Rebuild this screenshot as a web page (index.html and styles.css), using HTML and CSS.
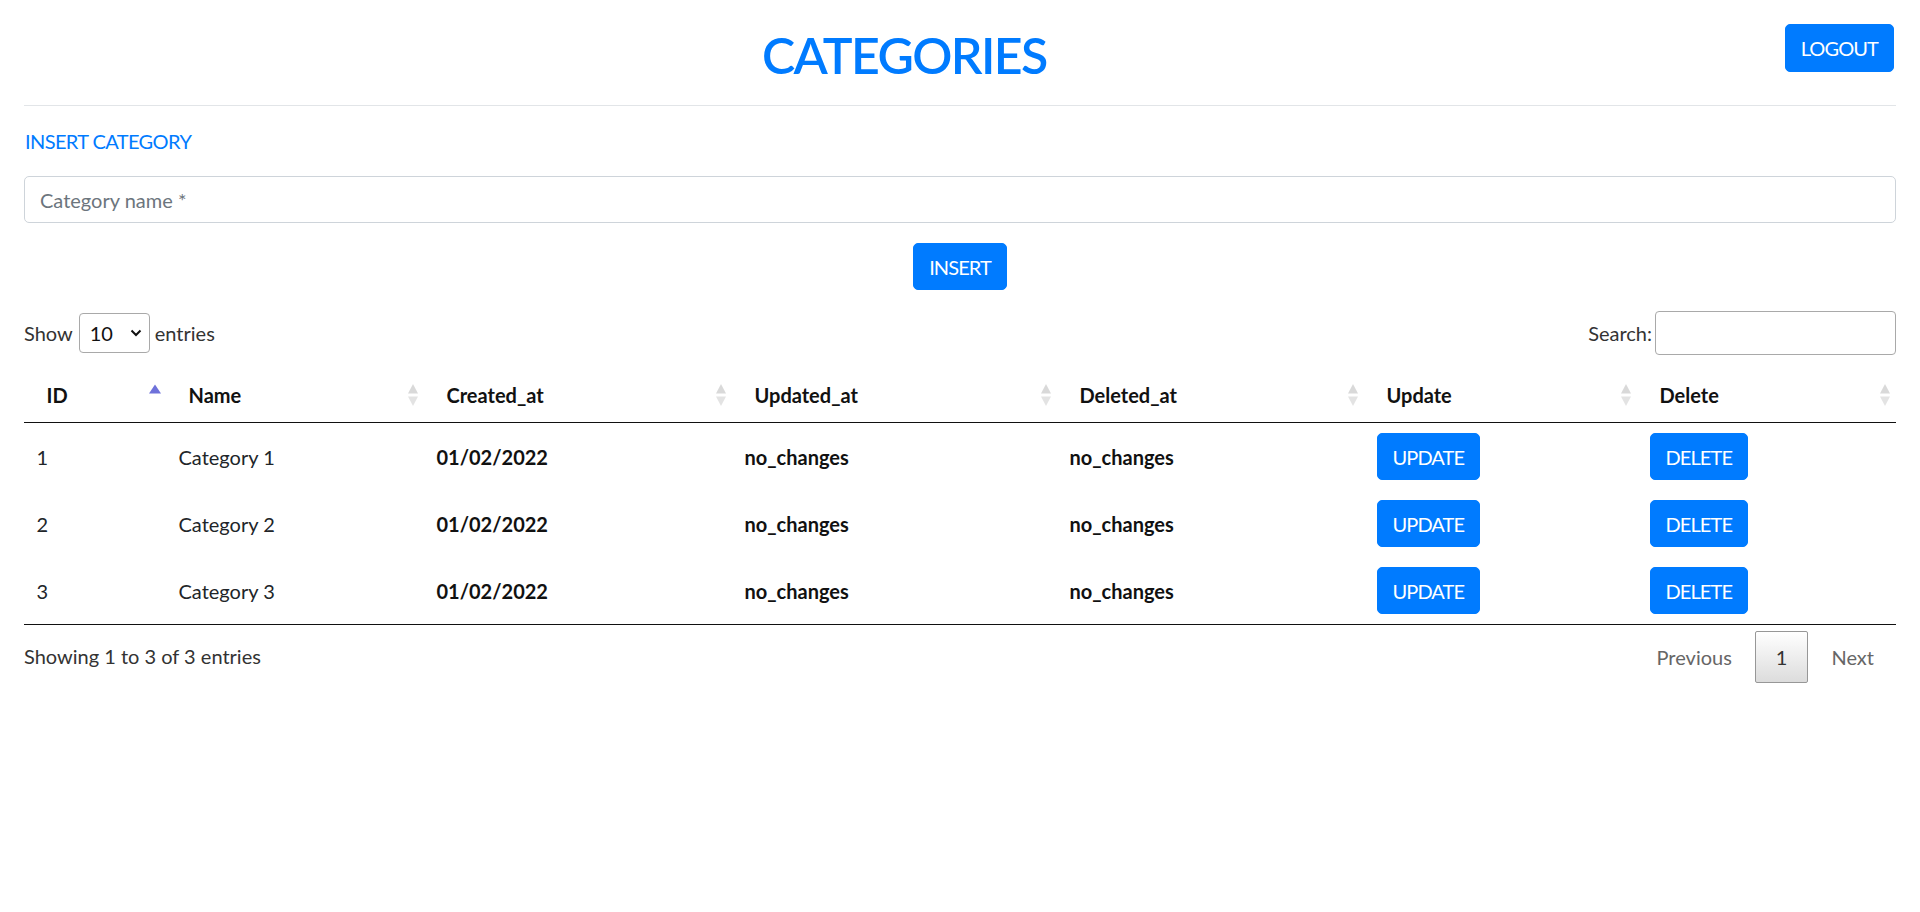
FILE: index.html
```html
<!DOCTYPE html>
<html lang="en">
<head>
<meta charset="utf-8">
<title>Categories</title>
<link rel="stylesheet" href="styles.css">
</head>
<body>
<div class="page">
  <header class="topbar">
    <h1 class="title">CATEGORIES</h1>
    <button class="btn logout">LOGOUT</button>
  </header>
  <hr class="divider">
  <a class="insert-link" href="#">INSERT CATEGORY</a>
  <form class="insert-form">
    <input class="form-control" type="text" placeholder="Category name *">
    <div class="form-actions"><button class="btn" type="button">INSERT</button></div>
  </form>

  <div class="dt-top">
    <label class="dt-length">Show
      <span class="select-wrap">
        <select class="dt-select"><option>10</option><option>25</option><option>50</option><option>100</option></select>
        <svg class="chev" width="12" height="8" viewBox="0 0 12 8"><path d="M1.5 1.5 L6 6 L10.5 1.5" fill="none" stroke="#111" stroke-width="2"/></svg>
      </span>
      entries</label>
    <label class="dt-search">Search:<input class="search-input" type="search"></label>
  </div>

  <table class="dt">
    <colgroup>
      <col class="c1"><col class="c2"><col class="c3"><col class="c4"><col class="c5"><col class="c6"><col class="c7">
    </colgroup>
    <thead>
      <tr>
        <th><div class="th-in"><span>ID</span><svg class="sort" width="12" height="24" viewBox="0 0 12 24"><polygon points="0,10.5 6,1.5 12,10.5" fill="#6e71da"/></svg></div></th>
        <th><div class="th-in"><span>Name</span><svg class="sort" width="12" height="24" viewBox="0 0 12 24"><polygon points="1,10.5 6,1 11,10.5" fill="#d9d9d9"/><polygon points="1,13.5 6,23 11,13.5" fill="#e3e3e3"/></svg></div></th>
        <th><div class="th-in"><span>Created_at</span><svg class="sort" width="12" height="24" viewBox="0 0 12 24"><polygon points="1,10.5 6,1 11,10.5" fill="#d9d9d9"/><polygon points="1,13.5 6,23 11,13.5" fill="#e3e3e3"/></svg></div></th>
        <th><div class="th-in"><span>Updated_at</span><svg class="sort" width="12" height="24" viewBox="0 0 12 24"><polygon points="1,10.5 6,1 11,10.5" fill="#d9d9d9"/><polygon points="1,13.5 6,23 11,13.5" fill="#e3e3e3"/></svg></div></th>
        <th><div class="th-in"><span>Deleted_at</span><svg class="sort" width="12" height="24" viewBox="0 0 12 24"><polygon points="1,10.5 6,1 11,10.5" fill="#d9d9d9"/><polygon points="1,13.5 6,23 11,13.5" fill="#e3e3e3"/></svg></div></th>
        <th><div class="th-in"><span>Update</span><svg class="sort" width="12" height="24" viewBox="0 0 12 24"><polygon points="1,10.5 6,1 11,10.5" fill="#d9d9d9"/><polygon points="1,13.5 6,23 11,13.5" fill="#e3e3e3"/></svg></div></th>
        <th><div class="th-in"><span>Delete</span><svg class="sort" width="12" height="24" viewBox="0 0 12 24"><polygon points="1,10.5 6,1 11,10.5" fill="#d9d9d9"/><polygon points="1,13.5 6,23 11,13.5" fill="#e3e3e3"/></svg></div></th>
      </tr>
    </thead>
    <tbody>
      <tr>
        <td>1</td><td>Category 1</td><td class="b">01/02/2022</td><td class="b">no_changes</td><td class="b">no_changes</td>
        <td><button class="btn">UPDATE</button></td><td><button class="btn">DELETE</button></td>
      </tr>
      <tr>
        <td>2</td><td>Category 2</td><td class="b">01/02/2022</td><td class="b">no_changes</td><td class="b">no_changes</td>
        <td><button class="btn">UPDATE</button></td><td><button class="btn">DELETE</button></td>
      </tr>
      <tr>
        <td>3</td><td>Category 3</td><td class="b">01/02/2022</td><td class="b">no_changes</td><td class="b">no_changes</td>
        <td><button class="btn">UPDATE</button></td><td><button class="btn">DELETE</button></td>
      </tr>
    </tbody>
  </table>

  <div class="dt-bottom">
    <div class="dt-info">Showing 1 to 3 of 3 entries</div>
    <div class="dt-paginate">
      <a class="pg disabled">Previous</a>
      <a class="pg current">1</a>
      <a class="pg disabled">Next</a>
    </div>
  </div>
</div>
</body>
</html>
```

FILE: styles.css
```css
* { box-sizing: border-box; }
html, body { margin: 0; padding: 0; background: #fff; }
body {
  font-family: Lato, "Liberation Sans", sans-serif;
  font-size: 20px;
  line-height: 1.5;
  color: #212529;
}
.page { padding: 0 24px; }

.topbar {
  display: flex;
  align-items: flex-start;
  padding-top: 24px;
}
.title {
  flex: 1;
  margin: 1px 0 0;
  text-align: center;
  font-size: 50px;
  line-height: 1.2;
  font-weight: 600;
  letter-spacing: -1.6px;
  color: #007bff;
}
.btn {
  display: inline-block;
  font-family: inherit;
  font-size: 20px;
  line-height: 30px;
  letter-spacing: -0.9px;
  padding: 7.5px 15px;
  color: #fff;
  background: #007bff;
  border: 1px solid #007bff;
  border-radius: 5px;
  cursor: pointer;
}
.logout { height: 48px; margin-right: 2px; }

.divider {
  margin: 20px 0;
  border: 0;
  border-top: 1px solid #e2e5e8;
}
.insert-link {
  display: block;
  color: #007bff;
  text-decoration: none;
  line-height: 30px;
  letter-spacing: -0.6px;
  padding-left: 1px;
}
.insert-form { margin-top: 20px; }
.form-control {
  display: block;
  width: 100%;
  height: 47px;
  padding: 7.5px 15px;
  font-family: inherit;
  font-size: 20px;
  color: #495057;
  border: 1px solid #ced4da;
  border-radius: 5px;
}
.form-control::placeholder { color: #6c757d; }
.form-actions {
  display: flex;
  justify-content: center;
  margin-top: 20px;
}

.dt-top {
  display: flex;
  justify-content: space-between;
  align-items: center;
  height: 44px;
  margin-top: 21px;
}
.dt-length, .dt-search {
  display: flex;
  align-items: center;
  color: #333;
}
.select-wrap {
  position: relative;
  display: inline-flex;
  margin: 0 5px 0 6px;
}
.dt-select {
  appearance: none;
  -webkit-appearance: none;
  width: 71px;
  height: 40px;
  padding: 0 0 0 10px;
  font-family: inherit;
  font-size: 20px;
  color: #111;
  background: #fff;
  border: 1px solid #a9a9a9;
  border-radius: 4px;
}
.chev {
  position: absolute;
  right: 8px;
  top: 16px;
  pointer-events: none;
}
.search-input {
  width: 241px;
  height: 44px;
  margin-left: 3px;
  border: 1px solid #a9a9a9;
  border-radius: 4px;
  font-family: inherit;
  font-size: 20px;
}

.dt {
  width: 100%;
  margin-top: 12px;
  border-collapse: separate;
  border-spacing: 0;
  table-layout: fixed;
}
.c1 { width: 142px; }
.c2 { width: 258px; }
.c3 { width: 308px; }
.c4 { width: 325px; }
.c5 { width: 307px; }
.c6 { width: 273px; }
.c7 { width: 259px; }
.dt th {
  text-align: left;
  font-weight: 700;
  padding: 12.5px 5px 12.5px 22.5px;
  border-bottom: 1px solid #111;
  color: #111;
}
.th-in {
  display: flex;
  justify-content: space-between;
  align-items: center;
  height: 30px;
}
.sort { display: block; flex: none; }
.dt td {
  padding: 10px 12.5px;
  height: 67px;
  vertical-align: middle;
}
.dt td.b { font-weight: 700; color: #111; }
.dt tbody tr:last-child td { border-bottom: 1px solid #111; }

.dt-bottom {
  display: flex;
  justify-content: space-between;
  align-items: flex-start;
}
.dt-info {
  padding-top: 16px;
  color: #333;
}
.dt-paginate {
  display: flex;
  padding-top: 6px;
}
.pg {
  display: inline-block;
  min-width: 30px;
  padding: 10px 20px;
  margin-left: 2px;
  line-height: 30px;
  text-align: center;
  border: 1px solid transparent;
  border-radius: 2px;
  color: #666;
}
.pg.current {
  color: #333;
  border: 1px solid #979797;
  background: linear-gradient(to bottom, #fff 0%, #dcdcdc 100%);
  padding: 10px 20px;
}
.pg:last-child { padding-right: 21px; }
```
